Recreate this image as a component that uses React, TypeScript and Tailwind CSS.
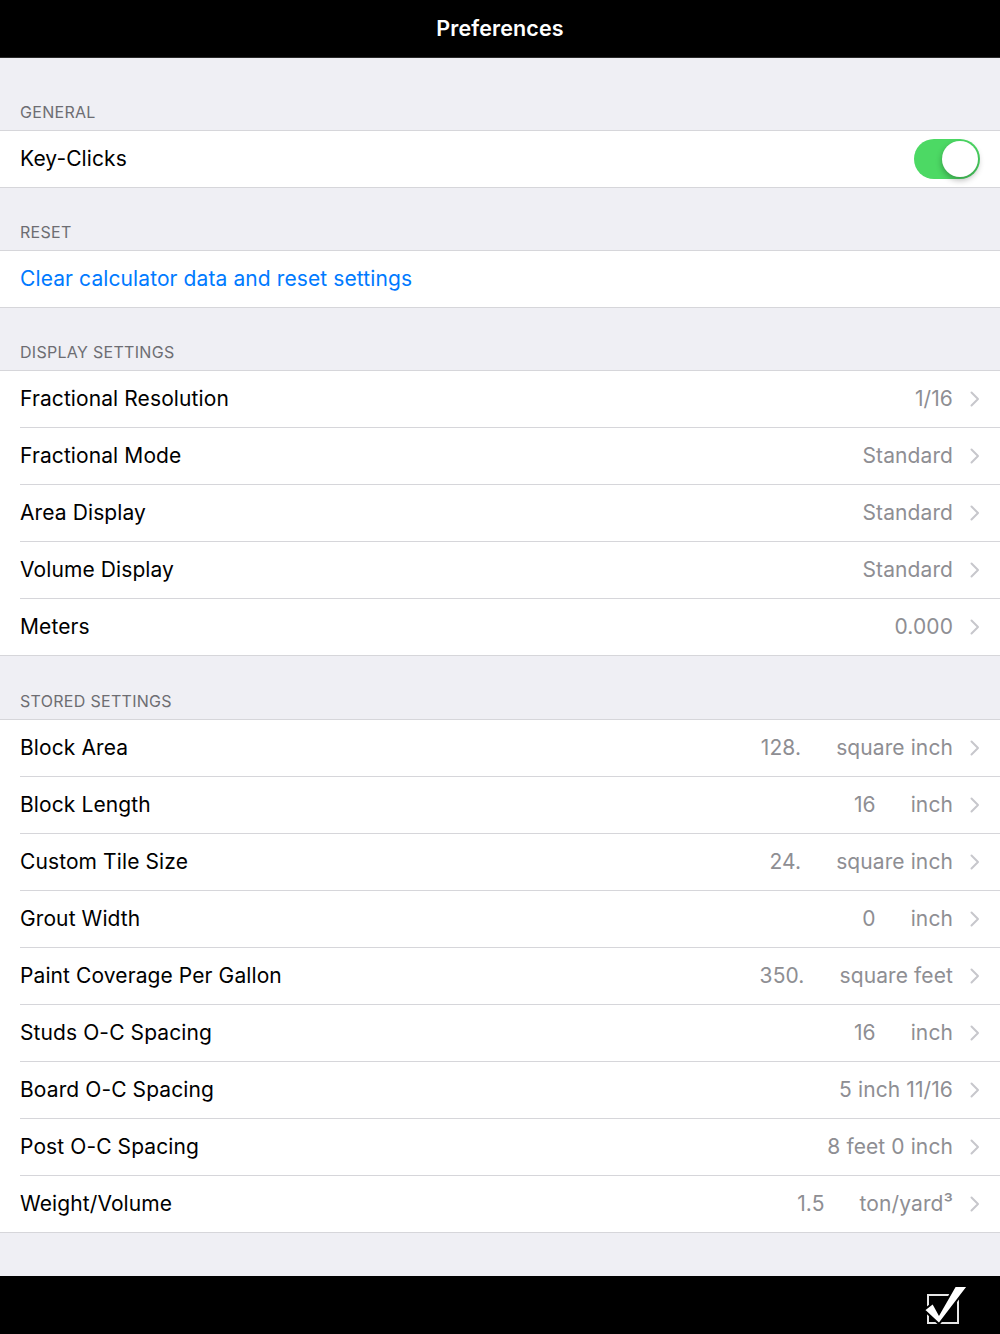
import React from 'react';

type Row = {
  label: string;
  value?: string;
  num?: string;
  unit?: React.ReactNode;
};

const displayRows: Row[] = [
  { label: 'Fractional Resolution', value: '1/16' },
  { label: 'Fractional Mode', value: 'Standard' },
  { label: 'Area Display', value: 'Standard' },
  { label: 'Volume Display', value: 'Standard' },
  { label: 'Meters', value: '0.000' },
];

const storedRows: Row[] = [
  { label: 'Block Area', num: '128.', unit: 'square inch' },
  { label: 'Block Length', num: '16', unit: 'inch' },
  { label: 'Custom Tile Size', num: '24.', unit: 'square inch' },
  { label: 'Grout Width', num: '0', unit: 'inch' },
  { label: 'Paint Coverage Per Gallon', num: '350.', unit: 'square feet' },
  { label: 'Studs O-C Spacing', num: '16', unit: 'inch' },
  { label: 'Board O-C Spacing', value: '5 inch 11/16' },
  { label: 'Post O-C Spacing', value: '8 feet 0 inch' },
  { label: 'Weight/Volume', num: '1.5', unit: 'ton/yard³' },
];

function Chevron() {
  return (
    <svg width="10" height="16" viewBox="0 0 10 16" className="shrink-0">
      <path d="M1.5 1.5 L8 8 L1.5 14.5" fill="none" stroke="#c7c7cc" strokeWidth="2" strokeLinecap="round" strokeLinejoin="round" />
    </svg>
  );
}

function SectionHeader({ title, height }: { title: string; height: string }) {
  return (
    <div className={`${height} flex items-end px-5 pb-2`}>
      <span className="text-[16px] leading-5 uppercase tracking-[0.3px] text-[#6d6d72]">{title}</span>
    </div>
  );
}

function DetailRow({ row, last }: { row: Row; last: boolean }) {
  return (
    <div className="pl-5 bg-white">
      <div className={`flex items-center pr-[20px] ${last ? 'h-[56px]' : 'h-[57px] border-b border-[#d6d6da]'}`}>
        <span className="flex-1 text-[21px] text-black">{row.label}</span>
        {row.value ? (
          <span className="text-[21px] text-[#8e8e93]">{row.value}</span>
        ) : (
          <span className="flex items-center gap-[35px] text-[21px] text-[#8e8e93]">
            <span>{row.num}</span>
            <span>{row.unit}</span>
          </span>
        )}
        <span className="ml-[17px]">
          <Chevron />
        </span>
      </div>
    </div>
  );
}

function Group({ children }: { children: React.ReactNode }) {
  return <div className="bg-white border-y border-[#d6d6da]">{children}</div>;
}

export default function App() {
  return (
    <div className="w-[1000px] h-[1334px] flex flex-col bg-[#efeff4] font-['Inter',sans-serif] tracking-[0.1px]">
      {/* Nav bar */}
      <div className="h-[58px] bg-black border-b border-[#2a2a2a] flex items-center justify-center">
        <span className="text-white text-[21.5px] font-semibold">Preferences</span>
      </div>

      <div className="flex-1">
        <SectionHeader title="General" height="h-[72px]" />
        <Group>
          <div className="h-[56px] flex items-center pl-5 pr-5">
            <span className="flex-1 text-[21px] text-black">Key-Clicks</span>
            <div className="w-[66px] h-[40px] rounded-full bg-[#4cd964] flex items-center justify-end pr-[2px]">
              <div className="w-[36px] h-[36px] rounded-full bg-white shadow-[0_3px_6px_rgba(0,0,0,0.3)]" />
            </div>
          </div>
        </Group>

        <SectionHeader title="Reset" height="h-[62px]" />
        <Group>
          <div className="h-[56px] flex items-center px-5">
            <span className="text-[21px] text-[#007aff]">Clear calculator data and reset settings</span>
          </div>
        </Group>

        <SectionHeader title="Display Settings" height="h-[62px]" />
        <Group>
          {displayRows.map((r, i) => (
            <DetailRow key={r.label} row={r} last={i === displayRows.length - 1} />
          ))}
        </Group>

        <SectionHeader title="Stored Settings" height="h-[63px]" />
        <Group>
          {storedRows.map((r, i) => (
            <DetailRow key={r.label} row={r} last={i === storedRows.length - 1} />
          ))}
        </Group>
      </div>

      {/* Toolbar */}
      <div className="h-[58px] bg-black flex items-center justify-end pr-[30px]">
        <svg width="50" height="46" viewBox="0 0 50 46">
          <rect x="8" y="13" width="30" height="28" fill="none" stroke="#e6e6e6" strokeWidth="2" />
          <path d="M4 28 L13 21 L19 32 L35 4 L48 4 L19 42 Z" fill="white" stroke="black" strokeWidth="2" strokeLinejoin="miter" />
        </svg>
      </div>
    </div>
  );
}
